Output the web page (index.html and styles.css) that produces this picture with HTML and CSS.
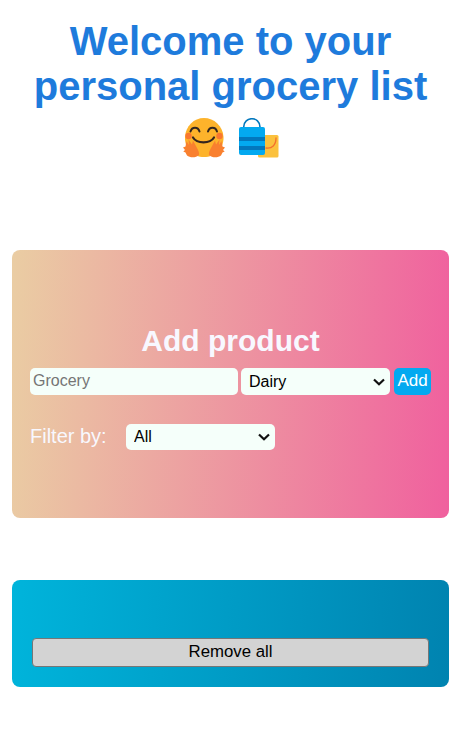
FILE: index.html
```html
<!DOCTYPE html>
<html lang="en">
<head>
<meta charset="utf-8">
<title>Grocery list</title>
<link rel="stylesheet" href="styles.css">
</head>
<body>
<header class="hero">
  <h1 class="title">Welcome to your personal grocery list</h1>
  <div class="emojis">
    <svg class="emoji" width="42" height="40" viewBox="0 0 42 40" role="img" aria-label="hugging face">
      <path d="M21 0C31 0 40 8 40.500 19C41 31 32 39 21 39C10 39 1.500 31 2 19C2.500 8 11 0 21 0Z" fill="#fdb32b"/>
      <circle cx="5.500" cy="18" r="3.200" fill="#f9772f"/>
      <circle cx="36.500" cy="18" r="3.200" fill="#f9772f"/>
      <path d="M7.500 13.500C9 8.500 15 8.500 16.500 13.500M25 13.500C26.500 8.500 32.500 8.500 34 13.500" fill="none" stroke="#33261f" stroke-width="2" stroke-linecap="round"/>
      <path d="M10 19.500C14 26 27 26 31 19.500" fill="none" stroke="#33261f" stroke-width="2.200" stroke-linecap="round"/>
      <path d="M3.500 23L6 27 5.500 21.500 9 26.500 10 22.500 13.500 29C15.500 32.500 16.500 35 16 37C13 40 7 40 4 37.500L2.500 34.500.3 33.500 2 32 0 29.500 2.500 28.500Z" fill="#f9802f"/>
      <path d="M38.500 23L36 27 36.500 21.500 33 26.500 32 22.500 28.500 29C26.500 32.500 25.500 35 26 37C29 40 35 40 38 37.500L39.500 34.500 41.700 33.500 40 32 42 29.500 39.500 28.500Z" fill="#f9802f"/>
    </svg>
    <svg class="emoji" width="40" height="40" viewBox="0 0 40 40" role="img" aria-label="shopping bags">
      <rect x="19" y="17" width="20.500" height="22.500" rx="1.500" fill="#fbc13d"/>
      <path d="M37 20C37 27 33 31 27 30" fill="none" stroke="#f4702d" stroke-width="1.300" stroke-linecap="round"/>
      <path d="M4.700 11V9C4.700-2 21 -2 21 9V11" fill="none" stroke="#0277bd" stroke-width="1.600"/>
      <rect x="0" y="9" width="26" height="28" rx="2" fill="#03a9f0"/>
      <path d="M0 19H26V23H0ZM0 28H26V32H0Z" fill="#0277bd"/>
    </svg>
  </div>
</header>

<section class="card card-add">
  <h2 class="card-title">Add product</h2>
  <form class="add-row">
    <input class="field field-name" type="text" placeholder="Grocery">
    <select class="field field-select"><option>Dairy</option></select>
    <button class="add-btn" type="button">Add</button>
  </form>
  <div class="filter-row">
    <label class="filter-label">Filter by:</label>
    <select class="field filter-select"><option>All</option></select>
  </div>
</section>

<section class="card card-list">
  <button class="remove-btn" type="button">Remove all</button>
</section>
</body>
</html>
```
FILE: styles.css
```css
* { box-sizing: border-box; }

html, body { height: 100%; }

body {
  margin: 0;
  padding: 0 11px 0 12px;
  background: #fff;
  font-family: "Liberation Sans", Arial, sans-serif;
  overflow: hidden;
}

.hero {
  height: 250px;
  padding-top: 19px;
  text-align: center;
}

.title {
  margin: 0;
  color: #1e7bdc;
  font-size: 40px;
  line-height: 45px;
  font-weight: 700;
}

.emojis {
  display: flex;
  justify-content: center;
  align-items: flex-start;
  gap: 14px;
  margin-top: 9px;
}

.emoji { display: block; }

.card { border-radius: 8px; }

.card-add {
  height: 268px;
  padding: 73px 18px 0;
  background: linear-gradient(93deg, #eacda3 0%, #f0609e 100%);
}

.card-title {
  margin: 0 0 9px;
  color: #f8f8ff;
  font-size: 30px;
  line-height: 36px;
  font-weight: 700;
  text-align: center;
}

.add-row {
  display: flex;
  gap: 3px;
  height: 27px;
}

.field {
  height: 27px;
  border: 0;
  border-radius: 5px;
  background-color: #f5fffa;
  color: #000;
  font-family: inherit;
  font-size: 16px;
}

.field-name {
  width: 208px;
  padding: 0 3px 2px;
}

.field-name::placeholder { color: #757575; }

.field-select,
.filter-select {
  appearance: none;
  background-image: url("data:image/svg+xml,%3Csvg xmlns='http://www.w3.org/2000/svg' width='12' height='8' viewBox='0 0 12 8'%3E%3Cpath d='M1 1.500l5 4.800 5-4.800' fill='none' stroke='%23111' stroke-width='2.200'/%3E%3C/svg%3E");
  background-repeat: no-repeat;
  background-position: right 5px center;
  width: 149px;
  padding-left: 8px;
  padding-bottom: 1px;
}

.add-btn {
  width: 37px;
  height: 27px;
  margin-left: 1px;
  padding: 0 0 2px;
  border: 0;
  border-radius: 5px;
  background: #03a9f0;
  color: #fff;
  font-family: inherit;
  font-size: 17px;
}

.filter-row {
  display: flex;
  align-items: center;
  margin-top: 29px;
}

.filter-label {
  width: 96px;
  padding-bottom: 1px;
  color: #f8f8ff;
  font-size: 20px;
}

.filter-select { height: 26px; }

.card-list {
  height: 107px;
  margin-top: 62px;
  padding: 58px 20px 0;
  background: linear-gradient(93deg, #00b4db 0%, #0083b0 100%);
}

.remove-btn {
  display: block;
  width: 100%;
  height: 29px;
  padding: 0 0 2px;
  border: 1.500px solid #767676;
  border-radius: 4px;
  background: #d3d3d3;
  color: #000;
  font-family: inherit;
  font-size: 16.800px;
}
```
